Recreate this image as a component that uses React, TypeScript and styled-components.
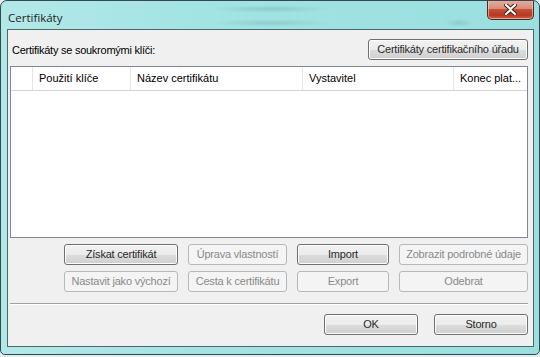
import React from "react";
import styled, { createGlobalStyle } from "styled-components";

const GlobalStyle = createGlobalStyle`
  html, body {
    margin: 0;
    padding: 0;
    background: #e4eded;
  }
  body {
    font-family: "Liberation Sans", Arial, sans-serif;
    font-size: 11px;
  }
`;

const Window = styled.div`
  box-sizing: border-box;
  width: 540px;
  height: 355px;
  border: 1px solid #33494e;
  border-radius: 7px 7px 5px 5px;
  display: flex;
  flex-direction: column;
  overflow: hidden;
  background:
    radial-gradient(ellipse 60px 4px at 270px 8px, rgba(70, 120, 130, 0.22), transparent),
    radial-gradient(ellipse 60px 4px at 270px 22px, rgba(70, 120, 130, 0.2), transparent),
    radial-gradient(ellipse 14px 4px at 458px 22px, rgba(70, 120, 130, 0.2), transparent),
    linear-gradient(to right, #b3e8e8 0%, #a2e3e3 40%, #9bdfe0 100%);
`;

const TitleBar = styled.div`
  height: 28px;
  flex: none;
  display: flex;
  align-items: flex-start;
  justify-content: space-between;
  padding-left: 7px;
`;

const Title = styled.span`
  font-family: "Open Sans", "Noto Sans", sans-serif;
  font-size: 11.5px;
  color: #1b2428;
  margin-top: 9px;
`;

const CloseButton = styled.div`
  width: 45px;
  height: 19px;
  margin-top: -1px;
  margin-right: 5px;
  border: 1px solid #4a2a24;
  border-top: none;
  border-radius: 0 0 5px 5px;
  display: flex;
  align-items: center;
  justify-content: center;
  box-shadow: inset 0 0 0 1px rgba(255, 220, 210, 0.55);
  background: linear-gradient(
    to bottom,
    #e6b0a4 0%,
    #d88c7a 45%,
    #c45038 50%,
    #b8371f 80%,
    #d0664a 100%
  );
`;

const Client = styled.div`
  box-sizing: border-box;
  margin: 0 5px 0 6px;
  height: 318px;
  border: 1px solid #4d686d;
  background: #f0f0f0;
  display: flex;
  flex-direction: column;
  padding: 9px 5px 0 2px;
`;

const TopRow = styled.div`
  display: flex;
  align-items: center;
  justify-content: space-between;
  padding: 0 0 0 2px;
`;

const Label = styled.span`
  color: #000;
  line-height: 13px;
  padding-top: 2px;
  letter-spacing: -0.25px;
`;

const Button = styled.button<{ $w?: number; $disabled?: boolean }>`
  box-sizing: border-box;
  width: ${(p) => (p.$w ? `${p.$w}px` : "auto")};
  height: 21px;
  padding: 0 2px;
  font-family: "Liberation Sans", Arial, sans-serif;
  font-size: 11px;
  font-weight: 400;
  line-height: 19px;
  letter-spacing: -0.2px;
  border-radius: 3px;
  white-space: nowrap;
  cursor: default;
  color: ${(p) => (p.$disabled ? "#8a8a8a" : "#2a2a2a")};
  border: 1px solid ${(p) => (p.$disabled ? "#b5b9bc" : "#707070")};
  box-shadow: ${(p) => (p.$disabled ? "none" : "inset 0 0 0 1px #fcfcfc")};
  background: ${(p) =>
    p.$disabled
      ? "#f4f4f4"
      : "linear-gradient(to bottom, #f2f2f2 0%, #ebebeb 50%, #dddddd 51%, #cfcfcf 100%)"};
`;

const ListView = styled.div`
  box-sizing: border-box;
  margin-top: 6px;
  height: 172px;
  border: 1px solid #828790;
  background: #fff;
`;

const Header = styled.div`
  display: grid;
  grid-template-columns: 22px 98px 172px 151px 73px;
  height: 23px;
  border-bottom: 1px solid #d5d5d5;
`;

const HeaderCell = styled.div`
  box-sizing: border-box;
  border-right: 1px solid #e3e5e7;
  padding: 5px 0 0 6px;
  line-height: 13px;
  color: #000;
  white-space: nowrap;
  overflow: hidden;

  &:last-child {
    border-right: none;
  }
`;

const ActionGrid = styled.div`
  display: grid;
  grid-template-columns: 114px 99px 92px 129px;
  column-gap: 10px;
  row-gap: 6px;
  margin: 6px 0 0 54px;
`;

const Separator = styled.div`
  margin: 11px 0 0 0;
  height: 1px;
  background: #a0a0a0;
  border-bottom: 1px solid #fff;
`;

const BottomRow = styled.div`
  display: flex;
  justify-content: flex-end;
  gap: 16px;
  margin-top: 9px;
`;

function CloseGlyph() {
  return (
    <svg width="13" height="11" viewBox="0 0 13 11">
      <path
        d="M2 1 L6.5 5 L11 1 M2 10 L6.5 6 L11 10"
        stroke="#3b1a14"
        strokeWidth="4"
        strokeLinecap="square"
        fill="none"
      />
      <path
        d="M2 1 L6.5 5 L11 1 M2 10 L6.5 6 L11 10"
        stroke="#ffffff"
        strokeWidth="2.2"
        strokeLinecap="square"
        fill="none"
      />
    </svg>
  );
}

const columns = ["", "Použití klíče", "Název certifikátu", "Vystavitel", "Konec plat..."];

const actions: { label: string; disabled: boolean }[] = [
  { label: "Získat certifikát", disabled: false },
  { label: "Úprava vlastností", disabled: true },
  { label: "Import", disabled: false },
  { label: "Zobrazit podrobné údaje", disabled: true },
  { label: "Nastavit jako výchozí", disabled: true },
  { label: "Cesta k certifikátu", disabled: true },
  { label: "Export", disabled: true },
  { label: "Odebrat", disabled: true },
];

export default function App() {
  return (
    <>
      <GlobalStyle />
      <Window>
        <TitleBar>
          <Title>Certifikáty</Title>
          <CloseButton>
            <CloseGlyph />
          </CloseButton>
        </TitleBar>
        <Client>
          <TopRow>
            <Label>Certifikáty se soukromými klíči:</Label>
            <Button $w={160}>Certifikáty certifikačního úřadu</Button>
          </TopRow>
          <ListView>
            <Header>
              {columns.map((c, i) => (
                <HeaderCell key={i}>{c}</HeaderCell>
              ))}
            </Header>
          </ListView>
          <ActionGrid>
            {actions.map((a) => (
              <Button key={a.label} $disabled={a.disabled}>
                {a.label}
              </Button>
            ))}
          </ActionGrid>
          <Separator />
          <BottomRow>
            <Button $w={94}>OK</Button>
            <Button $w={94}>Storno</Button>
          </BottomRow>
        </Client>
      </Window>
    </>
  );
}
